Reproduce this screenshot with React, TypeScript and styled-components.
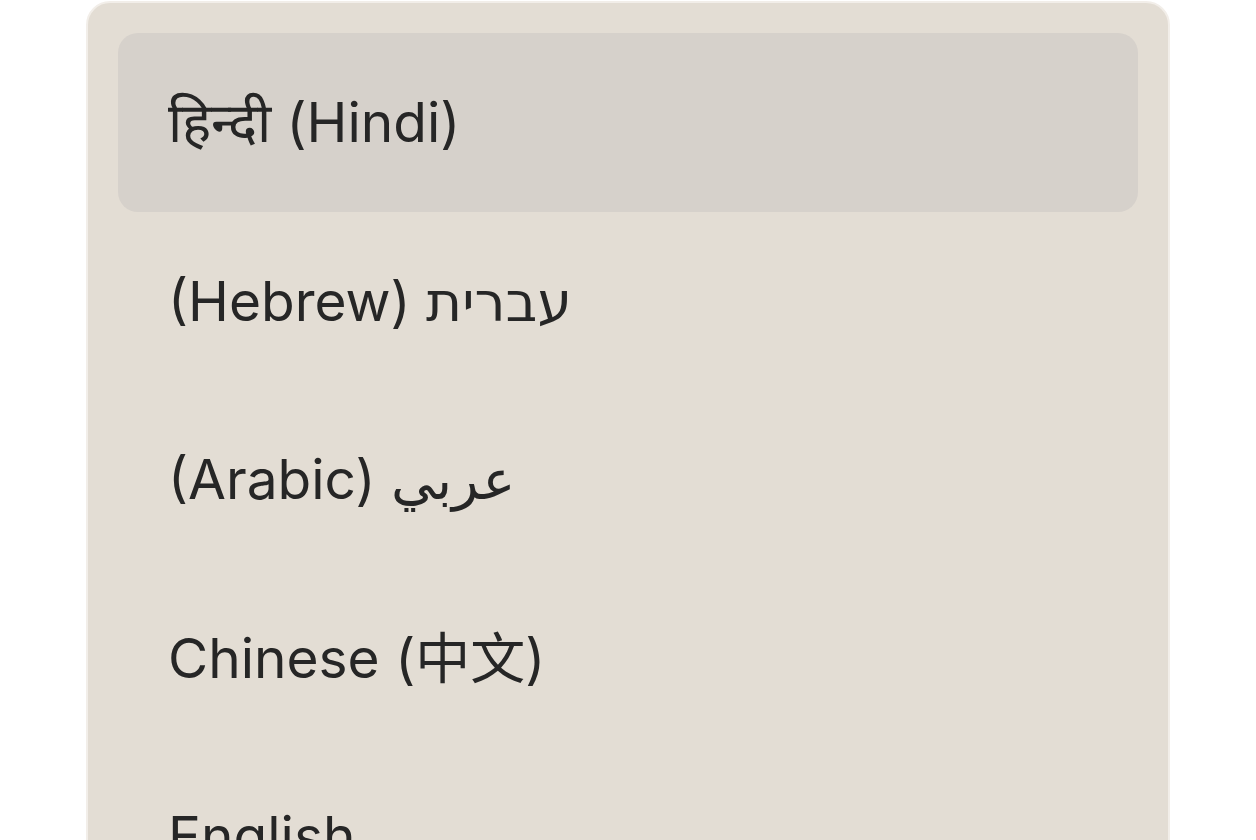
import React from "react";
import styled, { createGlobalStyle, css } from "styled-components";

const GlobalStyle = createGlobalStyle`
  html, body {
    margin: 0;
    padding: 0;
    background: #ffffff;
    overflow: hidden;
  }
  body {
    font-family: Inter, "DejaVu Sans", "Noto Sans CJK SC", sans-serif;
  }
`;

const Page = styled.div`
  display: flex;
  justify-content: center;
  padding-top: 1px;
  height: 840px;
  box-sizing: border-box;
`;

const Menu = styled.ul`
  list-style: none;
  margin: 0;
  width: 1084px;
  box-sizing: border-box;
  padding: 30px;
  background-color: #e3ddd4;
  border: 2px solid #f2eee9;
  border-radius: 24px;
  display: flex;
  flex-direction: column;
  align-self: flex-start;
`;

interface ItemProps {
  $active?: boolean;
}

const Item = styled.li<ItemProps>`
  display: flex;
  align-items: center;
  flex-shrink: 0;
  height: 178.5px;
  padding: 0 50px;
  border-radius: 20px;
  font-size: 55px;
  line-height: 1.5;
  color: #262626;
  white-space: nowrap;
  cursor: pointer;

  ${({ $active }) =>
    $active &&
    css`
      background-color: #d6d1cb;
    `}
`;

const languages = [
  "हिन्दी (Hindi)",
  "(Hebrew) עברית",
  "(Arabic) عربي",
  "Chinese (中文)",
  "English",
  "Español (Spanish)",
];

const App: React.FC = () => {
  return (
    <>
      <GlobalStyle />
      <Page>
        <Menu role="listbox">
          {languages.map((label, i) => (
            <Item key={label} $active={i === 0} role="option">
              {label}
            </Item>
          ))}
        </Menu>
      </Page>
    </>
  );
};

export default App;
